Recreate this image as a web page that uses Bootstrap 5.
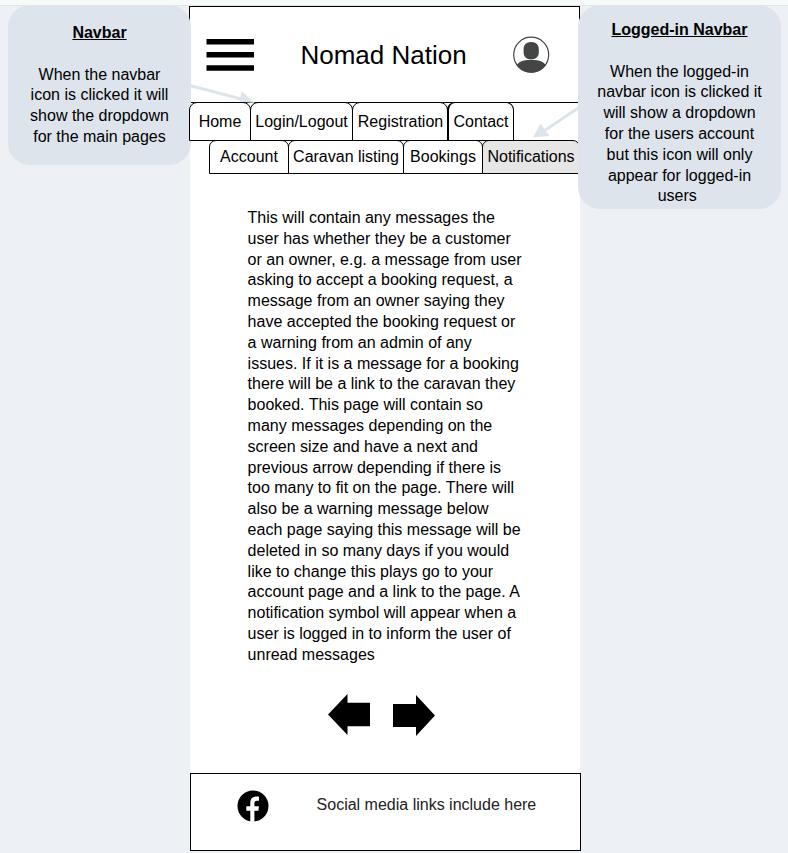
<!DOCTYPE html>
<html lang="en">
<head>
<meta charset="utf-8">
<meta name="viewport" content="width=device-width, initial-scale=1">
<title>Nomad Nation</title>
<link href="https://cdn.jsdelivr.net/npm/bootstrap@5.3.0/dist/css/bootstrap.min.css" rel="stylesheet">
<style>
body{font-family:"Liberation Sans",Arial,sans-serif;font-size:16px;line-height:20.8px;color:#000;background:#edf1f6;height:853px;overflow:hidden}
.top-strip{height:6px;background:#f6faf9;border-bottom:1px solid #dfe5ec}
.side-left{width:190px;padding-left:8px}
.side-right{width:208px}
.phone{width:390px;height:845px;background:#fff}
.note{background:#dde4ec;border-radius:22px;position:relative;z-index:2;white-space:nowrap;margin-top:-1px}
.note-a{width:183px;height:160px;padding-top:18px}
.note-b{width:203px;height:204px;margin-left:-2px;padding-top:15px}
.site-head{height:97px;border:1px solid #000;margin-left:-1px;padding:0 29px 0 16px}
.brand{font-size:26px;line-height:30px}
.tabs{margin-top:-1px;position:relative;z-index:3}
.tabs-main{margin-left:-1px;height:39px}
.tabs-user{margin-left:19px;height:34px;z-index:1}
.tab{border:1px solid #000;border-radius:7px 7px 0 0;background:#fff;color:#000;text-decoration:none;white-space:nowrap;margin-right:-1px;flex:none}
.tabs-main .tab{border-radius:8px 8px 0 0;padding-top:2px}
.w-home{width:62px}.w-login{width:103px}.w-reg{width:96px;padding-left:1px}.w-contact{width:67px}
.w-acc{width:80px}.w-list{width:116px}.w-book{width:80px}.w-note{width:98px;background:#e6e6e6}
.tabs-main .w-contact{border-left-width:2px}
.message{margin:34px 0 0 57.6px;white-space:nowrap}
.pager{margin:28px 0 0 138px;gap:22px}
.site-foot{width:391px;height:78px;border:1px solid #000;background:#fff;padding-left:46px;color:#222}
.pointers{left:0;top:0;z-index:2;pointer-events:none}
.foot-text{margin:21px 0 0 47.6px}
svg{display:block;flex:none}
</style>
</head>
<body class="position-relative">
<div class="top-strip"></div>
<div class="d-flex">
  <aside class="side-left flex-shrink-0">
    <div class="note note-a text-center">
      <strong class="text-decoration-underline">Navbar</strong><br><br>When the navbar<br>icon is clicked it will<br>show the dropdown<br>for the main pages
    </div>
  </aside>
  <main class="phone flex-shrink-0 d-flex flex-column">
    <header class="site-head d-flex align-items-center justify-content-between flex-shrink-0">
      <svg width="48" height="32" fill="#000" aria-label="Menu"><path d="M.5 0h47.500v5.500H.5zM.5 13h47.500v5.500H.5zM.5 26.300h47.500v5.500H.5z"/></svg>
      <div class="brand">Nomad Nation</div>
      <svg width="37" height="37" viewBox="0 0 37 37" aria-label="Account">
        <defs><clipPath id="disc"><circle cx="18.200" cy="18.700" r="18"/></clipPath></defs>
        <circle cx="18.200" cy="18.700" r="17.500" fill="#fff" stroke="#434645" stroke-width="1.200"/>
        <path d="M18.200 6c5 0 7.600 3 7.600 7v3.500c0 4-3 7-7.600 7s-7.600-3-7.600-7V13c0-4 2.600-7 7.600-7zM3 31c1.500-5.200 6.500-6.900 15.200-6.900S31.900 25.800 33.400 31l3 6H0z" fill="#434645" clip-path="url(#disc)"/>
      </svg>
    </header>
    <nav class="tabs tabs-main d-flex flex-shrink-0">
      <a class="tab w-home d-flex align-items-center justify-content-center">Home</a>
      <a class="tab w-login d-flex align-items-center justify-content-center">Login/Logout</a>
      <a class="tab w-reg d-flex align-items-center justify-content-center">Registration</a>
      <a class="tab w-contact d-flex align-items-center justify-content-center">Contact</a>
    </nav>
    <nav class="tabs tabs-user d-flex flex-shrink-0">
      <a class="tab w-acc d-flex align-items-center justify-content-center">Account</a>
      <a class="tab w-list d-flex align-items-center justify-content-center">Caravan listing</a>
      <a class="tab w-book d-flex align-items-center justify-content-center">Bookings</a>
      <a class="tab w-note d-flex align-items-center justify-content-center">Notifications</a>
    </nav>
    <p class="message">This will contain any messages the<br>user has whether they be a customer<br>or an owner, e.g. a message from user<br>asking to accept a booking request, a<br>message from an owner saying they<br>have accepted the booking request or<br>a warning from an admin of any<br>issues. If it is a message for a booking<br>there will be a link to the caravan they<br>booked. This page will contain so<br>many messages depending on the<br>screen size and have a next and<br>previous arrow depending if there is<br>too many to fit on the page. There will<br>also be a warning message below<br>each page saying this message will be<br>deleted in so many days if you would<br>like to change this plays go to your<br>account page and a link to the page. A<br>notification symbol will appear when a<br>user is logged in to inform the user of<br>unread messages</p>
    <div class="pager d-flex">
      <svg width="43" height="43" aria-label="Previous"><path d="M0 20.500L19.500 0v8.700H42v23.500H19.500V41z"/></svg>
      <svg width="43" height="43" aria-label="Next"><path d="M42 21.500L23 1v9H0v23h23v9z"/></svg>
    </div>
    <footer class="site-foot d-flex mt-auto flex-shrink-0 align-items-start">
      <svg class="mt-3" width="32" height="32" viewBox="0 0 32 32" aria-label="Facebook"><circle cx="16" cy="16" r="15.500"/><path d="M13.300 32V20.700H9.300v-4.400h4V13c0-4.200 2.400-6.400 6-6.400 1.200 0 2.700.2 2.700.2v4h-2c-2 0-2.600 1.200-2.600 2.500v3H22l-.6 4.400h-4V32z" fill="#fff"/></svg>
      <span class="foot-text">Social media links include here</span>
    </footer>
  </main>
  <aside class="side-right flex-shrink-0">
    <div class="note note-b text-center">
      <strong class="text-decoration-underline">Logged-in Navbar</strong><br><br>When the logged-in<br>navbar icon is clicked it<br>will show a dropdown<br>for the users account<br>but this icon will only<br>appear for logged-in<br>users&nbsp;
    </div>
  </aside>
</div>
<!-- Callout arrows lying over the header and tabs -->
<svg class="pointers position-absolute" width="788" height="220">
  <g stroke="#dde4ec" stroke-width="3" fill="#dde4ec"><path d="M190 85.500L243 99.500M579 107.500L544 131"/><path stroke="none" d="M255 103l-15.500-1.500 2-10.500zM533 137.500l7.500-14 9 12.500z"/></g>
</svg>
</body>
</html>
